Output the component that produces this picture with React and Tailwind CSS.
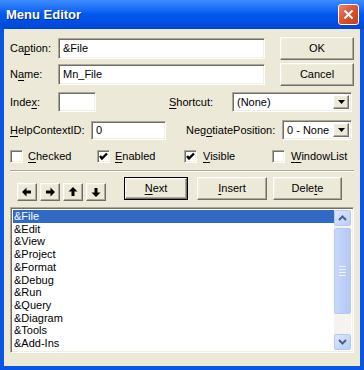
import React from 'react';

const sunken =
  'border border-t-[#aca899] border-l-[#aca899] border-b-white border-r-white shadow-[inset_1px_1px_0_#716f64,inset_-1px_-1px_0_#f1efe2] bg-white';
const raised =
  'border border-t-white border-l-white border-b-[#716f64] border-r-[#716f64] shadow-[inset_-1px_-1px_0_#aca899,inset_1px_1px_0_#f1efe2] bg-[#ece9d8]';

const items = ['&File', '&Edit', '&View', '&Project', '&Format', '&Debug', '&Run', '&Query', '&Diagram', '&Tools', '&Add-Ins'];

// label with one underlined access key
const L = ({ pre, k, post }) => (
  <span>
    {pre}
    <span className="underline underline-offset-2">{k}</span>
    {post}
  </span>
);

const Check = ({ on }) => (
  <div className={`${sunken} w-[13px] h-[13px] flex items-center justify-center shrink-0`}>
    {on && (
      <svg width="9" height="9" viewBox="0 0 9 9">
        <path d="M1 4 L3 6.5 L8 1.5" fill="none" stroke="#000" strokeWidth="2.4" />
      </svg>
    )}
  </div>
);

const Combo = ({ value, w }) => (
  <div className={`${sunken} ${w} h-[20px] flex items-center p-[2px]`}>
    <span className="flex-1 pl-[2px]">{value}</span>
    <div className={`${raised} w-[16px] h-full flex items-center justify-center`}>
      <svg width="7" height="4" viewBox="0 0 7 4">
        <path d="M0 0 H7 L3.5 4 Z" fill="#000" />
      </svg>
    </div>
  </div>
);

const Arrow = ({ rot }) => (
  <div className={`${raised} w-[20px] h-[18px] flex items-center justify-center`}>
    <svg width="10" height="10" viewBox="0 0 10 10" className={rot}>
      <path d="M0 5 L4.5 0.5 V3.5 H9 V6.5 H4.5 V9.5 Z" fill="#000" />
    </svg>
  </div>
);

const Chevron = ({ up }) => (
  <div className="w-[17px] h-[16px] rounded-[2px] border border-[#b6c9f5] bg-gradient-to-br from-[#dde7fd] to-[#b8cdf8] flex items-center justify-center">
    <svg width="9" height="6" viewBox="0 0 9 6">
      <path d={up ? 'M1 5 L4.5 1.5 L8 5' : 'M1 1 L4.5 4.5 L8 1'} fill="none" stroke="#4d6185" strokeWidth="2" />
    </svg>
  </div>
);

export default function App() {
  return (
    <div className="w-[364px] h-[370px] flex flex-col text-[11px] text-black font-['Liberation_Sans',Arial,sans-serif] leading-none">
      {/* title bar */}
      <div className="h-[29px] shrink-0 flex items-center pl-[6px] pr-[5px] bg-gradient-to-b from-[#3d8cff] via-[#0058ee] to-[#0046d6]">
        <span className="text-white font-bold text-[13px] flex-1 [text-shadow:1px_1px_0_#0a2a8a]">Menu Editor</span>
        <div className="w-[21px] h-[21px] rounded-[3px] border border-white bg-gradient-to-br from-[#e8836a] via-[#d9522d] to-[#c2401c] flex items-center justify-center">
          <svg width="11" height="11" viewBox="0 0 11 11">
            <path d="M1.5 1.5 L9.5 9.5 M9.5 1.5 L1.5 9.5" stroke="#fff" strokeWidth="2" />
          </svg>
        </div>
      </div>

      {/* body */}
      <div className="flex-1 flex flex-col bg-[#ece9d8] border-x-4 border-b-4 border-[#0a55e4] px-[6px]">
        <div className="flex items-center h-[23px] mt-[8px]">
          <span className="w-[48px]"><L pre="Ca" k="p" post="tion:" /></span>
          <div className={`${sunken} w-[207px] h-[21px] flex items-center pl-[4px]`}>&File</div>
          <div className="flex-1" />
          <div className={`${raised} w-[74px] h-[23px] flex items-center justify-center`}>OK</div>
        </div>
        <div className="flex items-center h-[23px] mt-[3px]">
          <span className="w-[48px]"><L pre="N" k="a" post="me:" /></span>
          <div className={`${sunken} w-[207px] h-[21px] flex items-center pl-[4px]`}>Mn_File</div>
          <div className="flex-1" />
          <div className={`${raised} w-[74px] h-[23px] flex items-center justify-center`}>Cancel</div>
        </div>

        <div className="flex items-center h-[20px] mt-[6px]">
          <span className="w-[48px]"><L pre="Inde" k="x" post=":" /></span>
          <div className={`${sunken} w-[38px] h-[20px]`} />
          <span className="ml-[73px] w-[63px]"><L pre="" k="S" post="hortcut:" /></span>
          <Combo value="(None)" w="w-[120px]" />
        </div>

        <div className="flex items-center h-[20px] mt-[8px]">
          <span className="w-[81px]"><L pre="" k="H" post="elpContextID:" /></span>
          <div className={`${sunken} w-[75px] h-[19px] flex items-center pl-[4px]`}>0</div>
          <span className="ml-[20px] w-[96px]"><L pre="Neg" k="o" post="tiatePosition:" /></span>
          <Combo value="0 - None" w="w-[70px]" />
        </div>

        <div className="flex items-center h-[13px] mt-[10px]">
          <div className="w-[87px] flex items-center gap-[5px]"><Check /><L pre="" k="C" post="hecked" /></div>
          <div className="w-[87px] flex items-center gap-[5px]"><Check on /><L pre="" k="E" post="nabled" /></div>
          <div className="w-[88px] flex items-center gap-[6px]"><Check on /><L pre="" k="V" post="isible" /></div>
          <div className="flex items-center gap-[6px]"><Check /><L pre="" k="W" post="indowList" /></div>
        </div>

        <div className="mt-[7px] h-[2px] border-t border-t-[#aca899] border-b border-b-white" />

        <div className="flex items-end h-[23px] mt-[5px]">
          <div className="flex gap-[3px] ml-[7px] mb-[-1px]">
            <Arrow rot="" />
            <Arrow rot="rotate-180" />
            <Arrow rot="rotate-90" />
            <Arrow rot="-rotate-90" />
          </div>
          <div className="ml-[18px] w-[64px] h-[23px] border border-black">
            <div className={`${raised} w-full h-full flex items-center justify-center`}><L pre="" k="N" post="ext" /></div>
          </div>
          <div className={`${raised} ml-[9px] w-[70px] h-[23px] flex items-center justify-center`}><L pre="" k="I" post="nsert" /></div>
          <div className={`${raised} ml-[6px] w-[69px] h-[23px] flex items-center justify-center`}><L pre="Dele" k="t" post="e" /></div>
        </div>

        <div className={`${sunken} mt-[7px] h-[146px] flex p-[2px]`}>
          <div className="flex-1 flex flex-col">
            {items.map((t, i) => (
              <div key={t} className={`h-[13px] flex items-center pl-[1px] ${i === 0 ? 'bg-[#316ac5] text-white' : ''}`}>{t}</div>
            ))}
          </div>
          <div className="w-[17px] flex flex-col bg-[#f4f3ee]">
            <Chevron up />
            <div className="mt-[2px] h-[86px] rounded-[2px] border border-[#b6c9f5] bg-gradient-to-r from-[#c9d8fc] to-[#b3c8f5] flex flex-col items-center justify-center gap-[2px]">
              <div className="w-[7px] h-[1px] bg-[#eef3fe]" />
              <div className="w-[7px] h-[1px] bg-[#eef3fe]" />
              <div className="w-[7px] h-[1px] bg-[#eef3fe]" />
              <div className="w-[7px] h-[1px] bg-[#eef3fe]" />
            </div>
            <div className="flex-1" />
            <Chevron />
          </div>
        </div>
      </div>
    </div>
  );
}
